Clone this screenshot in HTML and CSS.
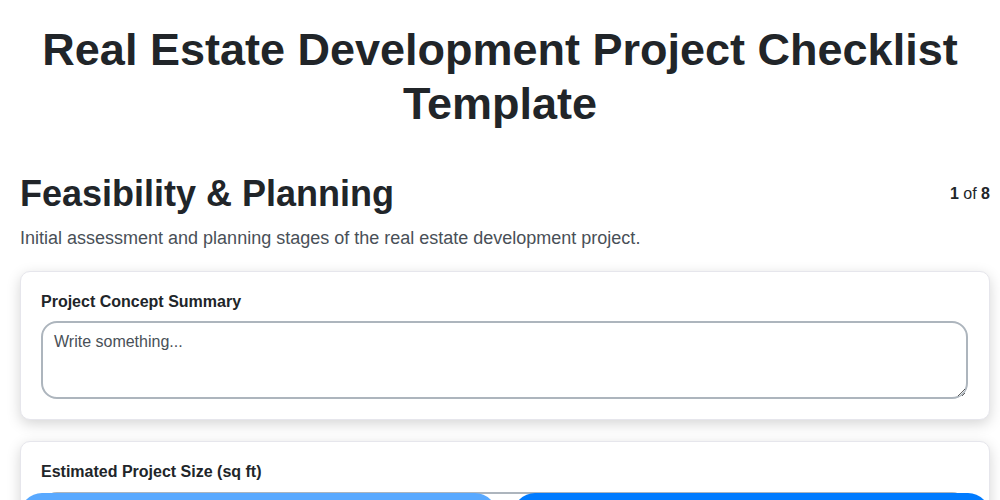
FILE: index.html
```html
<!DOCTYPE html>
<html lang="en">
<head>
<meta charset="utf-8">
<title>Real Estate Development Project Checklist Template</title>
<link rel="stylesheet" href="styles.css">
</head>
<body>
<h1 class="page-title">Real Estate Development Project Checklist Template</h1>
<section class="step">
  <div class="step-head">
    <h2 class="step-title">Feasibility &amp; Planning</h2>
    <div class="step-count"><b>1</b> of <b>8</b></div>
  </div>
  <p class="step-desc">Initial assessment and planning stages of the real estate development project.</p>
  <div class="card">
    <label class="field-label" for="concept">Project Concept Summary</label>
    <textarea id="concept" class="field-area" placeholder="Write something..."></textarea>
  </div>
  <div class="card">
    <label class="field-label" for="size">Estimated Project Size (sq ft)</label>
    <input id="size" class="field-input" type="number">
  </div>
</section>
<nav class="step-nav">
  <button class="nav-btn prev" disabled>Previous</button>
  <button class="nav-btn next">Next</button>
</nav>
</body>
</html>
```
FILE: styles.css
```css
html, body {
  margin: 0;
  background: #ffffff;
}
body {
  padding: 23px 10px 20px 20px;
  font-family: "Liberation Sans", Arial, sans-serif;
  color: #212529;
}
.page-title {
  margin: 0 -5px 41px -15px;
  font-size: 45px;
  line-height: 1.2;
  font-weight: 700;
  text-align: center;
  color: #212529;
}
.step-head {
  display: flex;
  align-items: center;
  justify-content: space-between;
}
.step-title {
  margin: 0;
  font-size: 36px;
  line-height: 1.2;
  font-weight: 700;
}
.step-count {
  font-size: 16px;
  line-height: 1.2;
}
.step-desc {
  margin: 10px 0 19px;
  font-size: 18px;
  line-height: 1.5;
  color: #495057;
}
.card {
  border: 1px solid #e6e6ec;
  border-radius: 10px;
  padding: 20px 21px 20px 20px;
  margin-bottom: 21px;
  background: #fff;
  box-shadow: 0 4px 14px rgba(0, 0, 0, 0.17);
}
.field-label {
  display: block;
  font-size: 16px;
  line-height: 1.2;
  font-weight: 700;
  margin-bottom: 10px;
}
.field-area, .field-input {
  display: block;
  width: 100%;
  box-sizing: border-box;
  border: 2px solid #adb5bd;
  border-radius: 16px;
  padding: 10px 11px;
  font-family: "Liberation Sans", Arial, sans-serif;
  font-size: 16px;
  color: #212529;
  background: #fff;
}
.field-area {
  height: 78px;
}
.field-input {
  height: 44px;
}
.field-area::placeholder {
  color: #495057;
  opacity: 1;
}
.step-nav {
  position: fixed;
  left: 0;
  right: 0;
  top: 493px;
  padding: 0 10px 0 20px;
  display: flex;
  gap: 16px;
}
.nav-btn {
  flex: 1;
  height: 48px;
  border: none;
  border-radius: 22px;
  background: #007bff;
  color: #fff;
  font-family: "Liberation Sans", Arial, sans-serif;
  font-size: 16px;
  font-weight: 700;
}
.nav-btn.prev {
  background: #59a9ff;
}
```
